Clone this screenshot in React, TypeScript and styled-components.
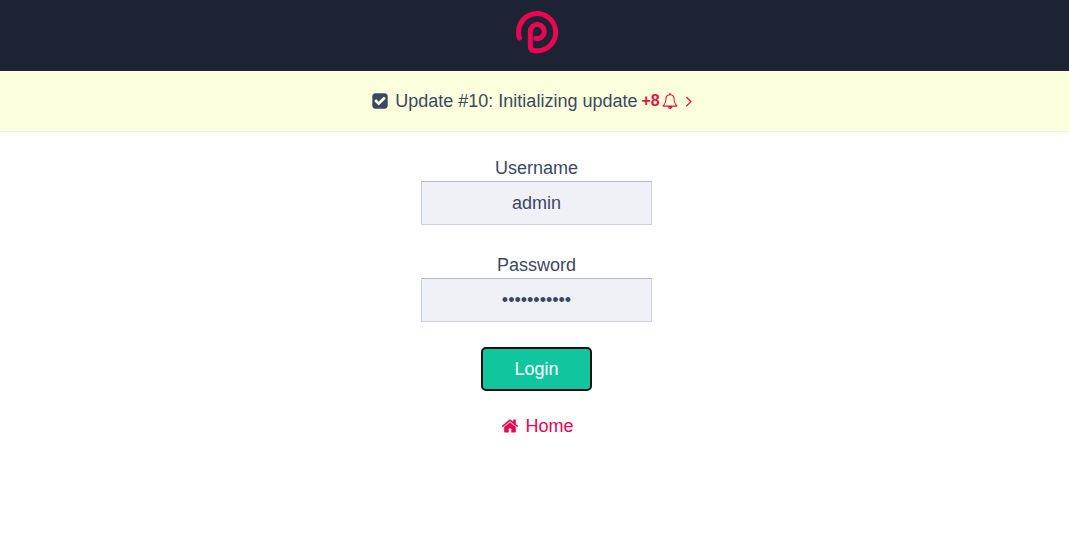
import React from "react";
import styled, { createGlobalStyle } from "styled-components";

const GlobalStyle = createGlobalStyle`
  *, *::before, *::after { box-sizing: border-box; }
  body {
    margin: 0;
    background: #fff;
    color: #3b4863;
    font-family: "Liberation Sans", Arial, sans-serif;
    font-size: 18px;
    line-height: 24px;
  }
`;

const Header = styled.header`
  display: flex;
  justify-content: center;
  padding: 10px 0 16px 4px;
  background: #1e2334;
`;

const LogoLink = styled.a`
  display: block;
  height: 45px;
`;

const Notice = styled.div`
  display: flex;
  justify-content: center;
  align-items: center;
  padding: 18px 0;
  background: #fcffdc;
  border-bottom: 1px solid #eff0f6;
`;

const NoticeText = styled.span`
  margin: 0 4px 0 6px;
`;

const NoticeLink = styled.a`
  display: flex;
  align-items: center;
  gap: 2px;
  color: #e3123f;
  text-decoration: none;
  font-size: 16px;
`;

const Icon = styled.svg<{ $size: number }>`
  display: block;
  flex: none;
  width: ${(p) => p.$size}px;
  height: ${(p) => p.$size}px;
  fill: currentColor;
`;

const LoginForm = styled.form`
  display: flex;
  flex-direction: column;
  align-items: center;
  gap: 25px;
  padding: 24px 0 24px 4px;
`;

const Fields = styled.div`
  display: grid;
  gap: 28px;
`;

const Field = styled.div`
  display: flex;
  flex-direction: column;
  align-items: center;
  gap: 1px;
`;

const Input = styled.input`
  width: 231px;
  height: 44px;
  padding: 0 12px;
  border: 1px solid #ccd0da;
  border-top-color: #b2b8c8;
  border-radius: 0;
  background: #eff1f7;
  color: inherit;
  font: inherit;
  text-align: center;
  outline: none;
`;

const LoginButton = styled.button`
  height: 44px;
  padding: 0 31px;
  border: 2px solid #101010;
  border-radius: 5px;
  background: #11c69e;
  color: #fff;
  font: inherit;
  cursor: pointer;
`;

const HomeLink = styled.a`
  display: flex;
  align-items: center;
  gap: 6px;
  padding-left: 2px;
  color: #ec0050;
  line-height: 20px;
  text-decoration: none;
`;

const paths = {
  check:
    "M813 1299l614-614q19-19 19-45t-19-45l-102-102q-19-19-45-19t-45 19l-467 467-211-211q-19-19-45-19t-45 19l-102 102q-19 19-19 45t19 45l358 358q19 19 45 19t45-19zm851-883v960q0 119-84.5 203.5t-203.5 84.5h-960q-119 0-203.5-84.5t-84.5-203.5v-960q0-119 84.5-203.5t203.5-84.5h960q119 0 203.5 84.5t84.5 203.5z",
  bell:
    "M912 1696q0-16-16-16-59 0-101.5-42.5t-42.5-101.5q0-16-16-16t-16 16q0 73 51.5 124.5t124.5 51.5q16 0 16-16zm-666-288h1300q-266-300-266-832 0-51-24-105t-69-103-121.5-80.5-169.5-31.5-169.5 31.5-121.5 80.5-69 103-24 105q0 532-266 832zm1482 0q0 52-38 90t-90 38h-448q0 106-75 181t-181 75-181-75-75-181h-448q-52 0-90-38t-38-90q50-42 91-88t85-119.5 74.5-158.5 50-206 19.5-260q0-152 117-282.5t307-158.5q-8-19-8-39 0-40 28-68t68-28 68 28 28 68q0 20-8 39 190 28 307 158.5t117 282.5q0 139 19.5 260t50 206 74.5 158.5 85 119.5 91 88z",
  angle:
    "M1171 960q0 13-10 23l-466 466q-10 10-23 10t-23-10l-50-50q-10-10-10-23t10-23l393-393-393-393q-10-10-10-23t10-23l50-50q10-10 23-10t23 10l466 466q10 10 10 23z",
  home:
    "M1472 992v480q0 26-19 45t-45 19h-384v-384h-256v384h-384q-26 0-45-19t-19-45v-480q0-1 .5-3t.5-3l575-474 575 474q1 2 1 6zm223-69l-62 74q-8 9-21 11h-3q-13 0-21-7l-692-577-692 577q-12 8-24 7-13-2-21-11l-62-74q-8-10-7-23.5t11-21.5l719-599q32-26 76-26t76 26l244 204v-195q0-14 9-23t23-9h192q14 0 23 9t9 23v408l219 182q10 8 11 21.5t-7 23.5z",
};

function Glyph({ name, size }: { name: keyof typeof paths; size: number }) {
  return (
    <Icon $size={size} viewBox="0 0 1792 1792" aria-hidden="true">
      <path d={paths[name]} />
    </Icon>
  );
}

function Logo() {
  return (
    <svg width="44" height="45" viewBox="0 0 44 45" aria-hidden="true">
      <path
        d="M4.4 28A18.6 18.6 0 1 1 22.6 40.8H19.5Q15.3 40.8 15.3 36.6V21.5A7 7 0 1 1 21 28.4"
        fill="none"
        stroke="#ec0552"
        strokeWidth="5"
        strokeLinecap="round"
        strokeLinejoin="round"
      />
    </svg>
  );
}

export default function App() {
  return (
    <>
      <GlobalStyle />
      <Header>
        <LogoLink href="#" aria-label="Start page">
          <Logo />
        </LogoLink>
      </Header>
      <Notice>
        <Glyph name="check" size={18} />
        <NoticeText>Update #10: Initializing update</NoticeText>
        <NoticeLink href="#updates">
          <b>+8</b>
          <Glyph name="bell" size={16} />
          <Glyph name="angle" size={18} />
        </NoticeLink>
      </Notice>
      <main>
        <LoginForm onSubmit={(e: React.FormEvent) => e.preventDefault()}>
          <Fields>
            <Field>
              <label htmlFor="username">Username</label>
              <Input id="username" type="text" defaultValue="admin" />
            </Field>
            <Field>
              <label htmlFor="password">Password</label>
              <Input id="password" type="password" defaultValue="password123" />
            </Field>
          </Fields>
          <LoginButton type="submit">Login</LoginButton>
          <HomeLink href="#home">
            <Glyph name="home" size={18} />
            Home
          </HomeLink>
        </LoginForm>
      </main>
    </>
  );
}
